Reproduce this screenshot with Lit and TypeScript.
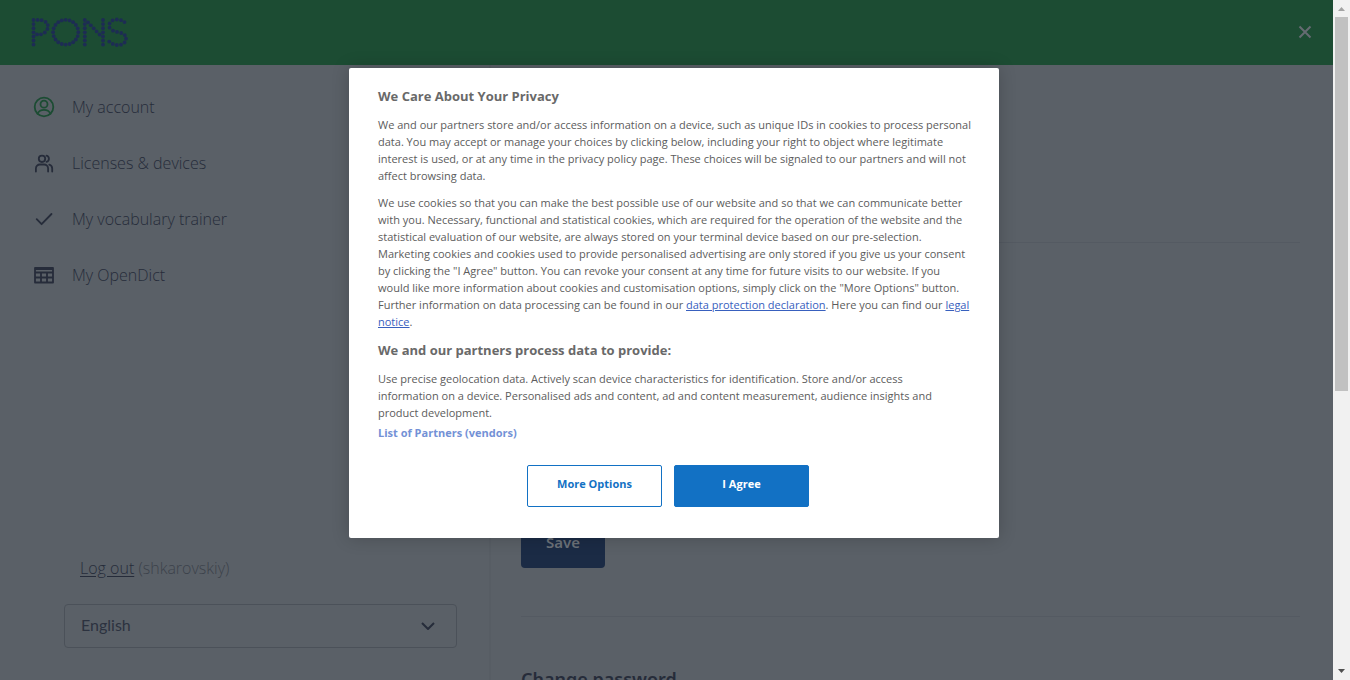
import { LitElement, html, css, svg } from "lit";
import { customElement } from "lit/decorators.js";

const LOGO_DOTS: number[][] = (() => {
  const dots: number[][] = [];
  const stem = (x: number) => {
    for (let i = 0; i < 7; i++) dots.push([x, 2.5 + i * 4.1]);
  };
  stem(2.5);
  dots.push([6.6, 2.4], [10.6, 2.7], [14.6, 4.4], [16.8, 7.6], [16.4, 11.4], [13.8, 15], [10, 16.8], [6, 16.9]);
  for (let i = 0; i < 20; i++) {
    const a = (i * Math.PI) / 10;
    dots.push([34.7 + 12.6 * Math.sin(a), 14.7 - 12.4 * Math.cos(a)]);
  }
  stem(53.8);
  stem(72);
  dots.push([57, 4.8], [59.8, 7.8], [62.7, 10.8], [65.6, 13.9], [68.6, 17]);
  dots.push(
    [93.5, 4.6], [90, 2.7], [85.8, 2], [81.6, 2.9], [78.6, 6], [78.6, 10.2], [82, 13.2], [86, 14.4],
    [90.2, 15.5], [93.8, 17.6], [95, 21.2], [93.6, 25], [90, 27.2], [85.8, 27.5], [81.8, 26.4], [78.2, 24.1]
  );
  return dots;
})();

@customElement("pons-logo")
export class PonsLogo extends LitElement {
  static styles = css`
    :host { display: block; line-height: 0; }
    .logo { fill: #1d2c54; }
  `;
  render() {
    return html`<svg class="logo" width="98" height="32" viewBox="0 0 98 32" role="img" aria-label="PONS">
      ${LOGO_DOTS.map(([x, y]) => svg`<circle cx=${x} cy=${y + 0.5} r="1.9"></circle>`)}
    </svg>`;
  }
}

const ICONS = {
  account: svg`<circle cx="12" cy="12" r="9.300"/><circle cx="12" cy="9.2" r="3.5"/><path d="M5.6 18.6c1.2-2.600 3.600-3.800 6.400-3.800s5.200 1.200 6.400 3.800"/>`,
  users: svg`<circle cx="10" cy="7.800" r="3.200"/><path d="M3.900 20.500v-3a4 4 0 0 1 4-4h4.200a4 4 0 0 1 4 4v3M14.500 4.700a3.200 3.200 0 0 1 0 6.200M17.300 13.700a4 4 0 0 1 2.900 3.800v3"/>`,
  check: svg`<path d="M4.700 12.200l4.900 5L19.500 7"/>`,
  table: svg`<path d="M3 5h18v14.500H3zM3 6h18M3 9.500h18M3 14.500h18M9 9.500v10M15 9.500v10"/>`,
};

const NAV = [
  { label: "My account", icon: ICONS.account, active: true },
  { label: "Licenses & devices", icon: ICONS.users },
  { label: "My vocabulary trainer", icon: ICONS.check },
  { label: "My OpenDict", icon: ICONS.table },
];

@customElement("account-sidebar")
export class AccountSidebar extends LitElement {
  static styles = css`
    :host {
      display: flex;
      flex-direction: column;
      box-sizing: border-box;
      padding: 14px 32px 32px;
      border-right: 2px solid #575d64;
      color: #262c3a;
      font-size: 16px;
    }
    .nav { display: flex; flex-direction: column; }
    .item {
      display: flex;
      align-items: center;
      gap: 16px;
      height: 56px;
      color: inherit;
      text-decoration: none;
      font-weight: 300;
    }
    .icon { width: 24px; height: 24px; fill: none; stroke: #262c3a; stroke-width: 1.8; stroke-linecap: round; stroke-linejoin: round; }
    .active .icon { stroke: #1c4c33; }
    .footer { margin: auto 0 0 32px; }
    .session { padding: 0 16px; line-height: 24px; margin: 0 0 24px; color: #3c424b; font-weight: 300; }
    .logout { color: #262c3a; text-underline-offset: 2px; }
    .picker { display: grid; align-items: center; }
    .select {
      grid-area: 1 / 1;
      appearance: none;
      width: 100%;
      height: 44px;
      padding: 0 16px 3px;
      border: 1px solid #4b5159;
      border-radius: 4px;
      background: transparent;
      color: #2c323f;
      font: 400 16px Lato, sans-serif;
    }
    .chevron {
      grid-area: 1 / 1;
      justify-self: end;
      margin-right: 22px;
      pointer-events: none;
      fill: none;
      stroke: #262c3a;
      stroke-width: 2;
    }
  `;
  render() {
    return html`
      <nav class="nav">
        ${NAV.map(
          (n) => html`<a href="#" class="item ${n.active ? "active" : ""}">
            <svg class="icon" viewBox="0 0 24 24" aria-hidden="true">${n.icon}</svg><span>${n.label}</span></a>`
        )}
      </nav>
      <div class="footer">
        <p class="session"><a class="logout" href="#">Log out</a> (shkarovskiy)</p>
        <div class="picker">
          <select class="select" aria-label="Language"><option>English</option></select>
          <svg class="chevron" width="14" height="8" viewBox="0 0 14 8" aria-hidden="true"><path d="M1 1l6 6 6-6" /></svg>
        </div>
      </div>
    `;
  }
}

@customElement("privacy-dialog")
export class PrivacyDialog extends LitElement {
  static styles = css`
    :host {
      display: block;
      box-sizing: border-box;
      width: 650px;
      max-width: 100%;
      padding: 20px 29px 31px;
      border-radius: 2px;
      background: #fff;
      color: #5c5c5c;
      box-shadow: 0 0 18px rgba(0, 0, 0, 0.2);
      font-size: 11px;
      line-height: 17px;
      font-weight: 400;
    }
    .title { margin: 0 0 11px; color: #696969; font-size: 13px; line-height: 17px; font-weight: 700; }
    .text { margin: 0 0 12px; white-space: nowrap; }
    .intro { margin-bottom: 10px; }
    .last { margin-bottom: 3px; }
    .link { color: #3860be; }
    .vendors { display: block; color: #7391d6; font-weight: 700; text-decoration: none; }
    .actions { display: flex; justify-content: center; gap: 12px; margin-top: 24px; padding-right: 12px; }
    .button {
      width: 135px;
      height: 42px;
      padding: 0 0 5px;
      border: 1px solid #1271c4;
      border-radius: 2px;
      background: #fff;
      color: #1271c4;
      font: inherit;
      font-weight: 700;
    }
    .primary { background: #1271c4; color: #fff; }
  `;
  render() {
    return html`
      <h2 class="title">We Care About Your Privacy</h2>
      <p class="text intro">
        We and our partners store and/or access information on a device, such as unique IDs in cookies to process personal<br />
        data. You may accept or manage your choices by clicking below, including your right to object where legitimate<br />
        interest is used, or at any time in the privacy policy page. These choices will be signaled to our partners and will not<br />
        affect browsing data.
      </p>
      <p class="text">
        We use cookies so that you can make the best possible use of our website and so that we can communicate better<br />
        with you. Necessary, functional and statistical cookies, which are required for the operation of the website and the<br />
        statistical evaluation of our website, are always stored on your terminal device based on our pre-selection.<br />
        Marketing cookies and cookies used to provide personalised advertising are only stored if you give us your consent<br />
        by clicking the "I Agree" button. You can revoke your consent at any time for future visits to our website. If you<br />
        would like more information about cookies and customisation options, simply click on the "More Options" button.<br />
        Further information on data processing can be found in our <a class="link" href="#">data protection declaration</a>. Here you can find our <a class="link" href="#">legal<br />
        notice</a>.
      </p>
      <h2 class="title">We and our partners process data to provide:</h2>
      <p class="text last">
        Use precise geolocation data. Actively scan device characteristics for identification. Store and/or access<br />
        information on a device. Personalised ads and content, ad and content measurement, audience insights and<br />
        product development.
      </p>
      <a class="vendors" href="#">List of Partners (vendors)</a>
      <div class="actions">
        <button class="button" type="button">More Options</button>
        <button class="button primary" type="button">I Agree</button>
      </div>
    `;
  }
}

@customElement("app-root")
export class AppRoot extends LitElement {
  static styles = css`
    :host {
      display: grid;
      grid-template-columns: minmax(0, 1fr) 17px;
      height: 100vh;
      overflow: hidden;
      background: #5a6067;
      font-family: "Open Sans", "Noto Sans", sans-serif;
    }
    .page { display: flex; flex-direction: column; min-height: 0; }
    .header {
      display: flex;
      justify-content: space-between;
      align-items: center;
      flex: none;
      height: 65px;
      box-sizing: border-box;
      padding: 0 21px 0 31px;
      background: #1c4c33;
    }
    .close { display: flex; padding: 0 0 1px; border: 0; background: none; }
    .close-icon { fill: none; stroke: #656b72; stroke-width: 2; }
    .body { display: flex; flex: 1; min-height: 0; }
    .sidebar { flex: 0 0 491px; }
    .main { flex: 1; min-width: 0; padding: 0 33px 0 30px; overflow: hidden; }
    .section { box-sizing: border-box; border-bottom: 1px solid #545a62; }
    .intro { height: 178px; }
    .profile { display: flex; align-items: flex-end; height: 374px; padding-bottom: 48px; }
    .save {
      height: 50px;
      width: 84px;
      padding: 0 0 2px;
      border: 0;
      border-radius: 4px;
      background: #1b2b45;
      color: #6b7178;
      font: 600 15px "Noto Sans", sans-serif;
    }
    .heading { margin: 48px 0 0; color: #262c3a; font: 600 18px/28px "Noto Sans", sans-serif; }
    .overlay {
      position: absolute;
      inset: 0;
      display: flex;
      justify-content: center;
      align-items: flex-start;
      padding: 10vh 2px 0 0;
    }
    .scrollbar {
      display: flex;
      flex-direction: column;
      align-items: center;
      background: #f1f1f1;
    }
    .arrow { flex: none; width: 17px; height: 17px; }
    .up { fill: #a3a3a3; }
    .down { fill: #505050; margin-top: auto; }
    .thumb { width: 13px; height: 55%; background: #c1c1c1; }
  `;
  render() {
    return html`
      <div class="page">
        <header class="header">
          <pons-logo></pons-logo>
          <button class="close" type="button" aria-label="Close">
            <svg class="close-icon" width="14" height="14" viewBox="0 0 14 14"><path d="M1.500 1.500l11 11M12.500 1.500l-11 11" /></svg>
          </button>
        </header>
        <div class="body">
          <account-sidebar class="sidebar"></account-sidebar>
          <main class="main">
            <section class="section intro"></section>
            <section class="section profile"><button class="save" type="button">Save</button></section>
            <h2 class="heading">Change password</h2>
          </main>
        </div>
      </div>
      <div class="scrollbar" aria-hidden="true">
        <svg class="arrow up" viewBox="0 0 17 17"><path d="M5 11h7L8.500 7z" /></svg>
        <div class="thumb"></div>
        <svg class="arrow down" viewBox="0 0 17 17"><path d="M5 6h7l-3.500 4z" /></svg>
      </div>
      <div class="overlay"><privacy-dialog role="dialog" aria-label="Privacy"></privacy-dialog></div>
    `;
  }
}
